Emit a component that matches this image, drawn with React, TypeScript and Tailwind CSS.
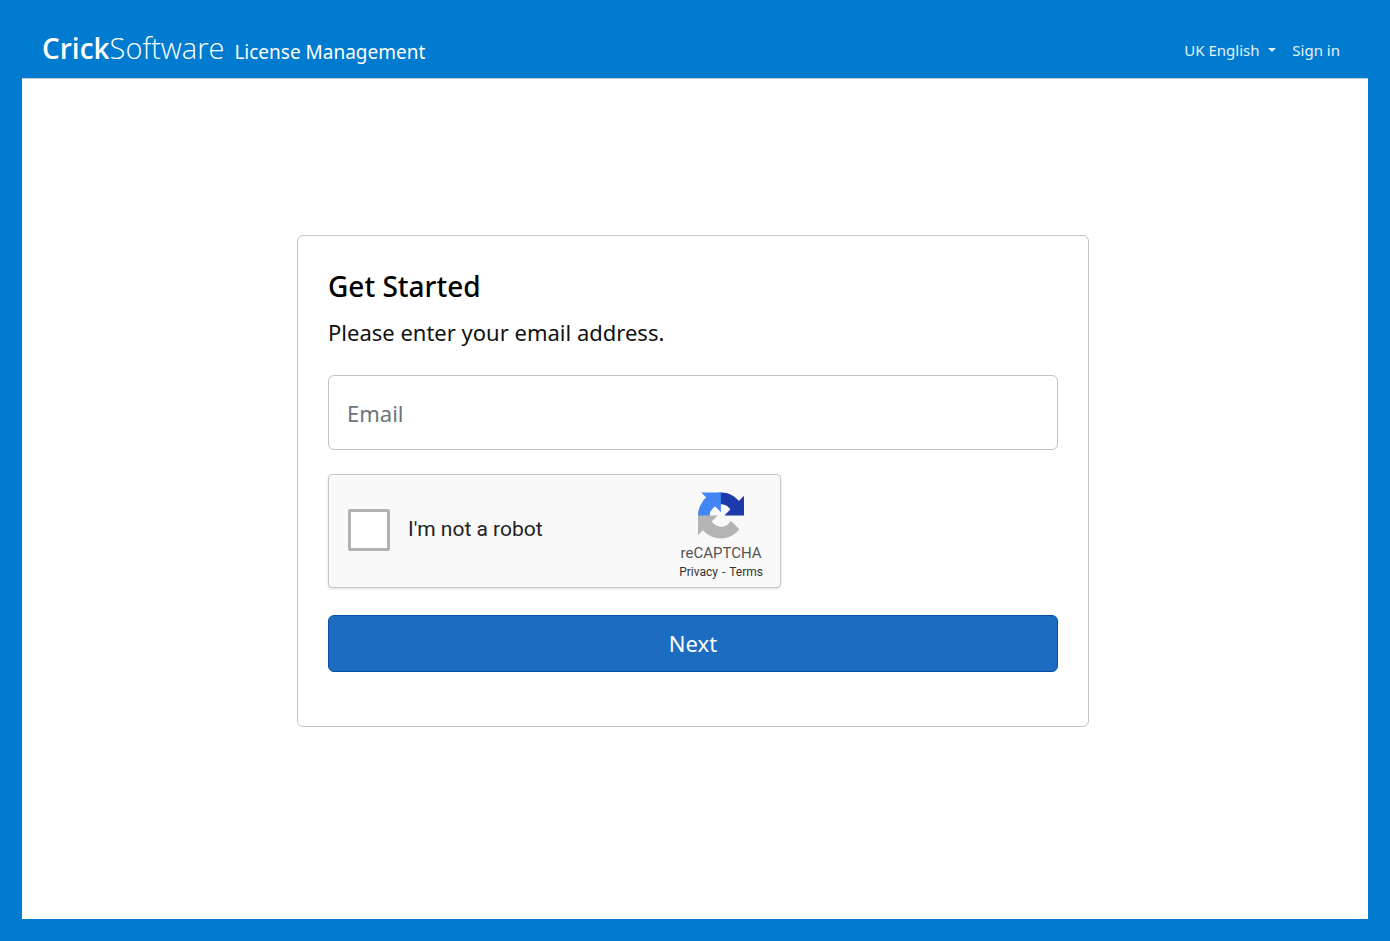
import { useState } from "react";

const RecaptchaLogo = () => (
    <svg width="46" height="47" viewBox="0 0 64 64" aria-hidden="true">
        <path fill="#1c3aa9" d="M64 31.955l-.033-1.37V4.687l-7.16 7.16C50.948 4.674 42.033.093 32.05.093c-10.4 0-19.622 4.96-25.458 12.64l11.736 11.86a15.55 15.55 0 0 1 4.754-5.334c2.05-1.6 4.952-2.906 8.968-2.906.485 0 .86.057 1.135.163 4.976.393 9.288 3.14 11.828 7.124l-8.307 8.307L64 31.953" />
        <path fill="#4285f4" d="M31.862.094l-1.37.033H4.594l7.16 7.16C4.58 13.147 0 22.06 0 32.046c0 10.4 4.96 19.622 12.64 25.458L24.5 45.768a15.55 15.55 0 0 1-5.334-4.754c-1.6-2.05-2.906-4.952-2.906-8.968 0-.485.057-.86.163-1.135.393-4.976 3.14-9.288 7.124-11.828l8.307 8.307L31.86.095" />
        <path fill="#b4b4b4" d="M.001 32.045l.033 1.37v25.898l7.16-7.16c5.86 7.173 14.774 11.754 24.76 11.754 10.4 0 19.622-4.96 25.458-12.64l-11.736-11.86a15.55 15.55 0 0 1-4.754 5.334c-2.05 1.6-4.952 2.906-8.968 2.906-.485 0-.86-.057-1.135-.163-4.976-.393-9.288-3.14-11.828-7.124l8.307-8.307c-10.522.04-22.4.066-27.295-.005" />
    </svg>
);

const Header = () => {
    const [language, setLanguage] = useState("en-GB");

    return (
        <header className="flex h-14 items-center justify-between pl-5 pr-7 text-white">
            <a href="#" className="flex items-baseline gap-2.5">
                <span className="font-['Open_Sans',sans-serif] leading-8">
                    <span className="text-[28px] font-semibold">Crick</span>
                    <span className="text-[29px] font-light">Software</span>
                </span>
                <span className="text-[19px] leading-8">License Management</span>
            </a>
            <nav className="flex items-center gap-4 text-[15px] text-white/90">
                <label className="flex items-center gap-2">
                    <select
                        aria-label="Language"
                        value={language}
                        onChange={(e) => setLanguage(e.target.value)}
                        className="appearance-none bg-transparent outline-none"
                    >
                        <option value="en-GB">UK English</option>
                    </select>
                    <svg width="8" height="4" viewBox="0 0 8 4" fill="currentColor" aria-hidden="true">
                        <path d="M0 0h8L4 4z" />
                    </svg>
                </label>
                <a href="#">Sign in</a>
            </nav>
        </header>
    );
};

const Recaptcha = () => {
    const [checked, setChecked] = useState(false);

    return (
        <div className="flex h-[114px] max-w-[453px] items-center justify-between rounded-sm border border-[#c6c6c6] bg-[#f9f9f9] pl-[19px] pr-[17px] font-[Roboto,sans-serif] shadow-sm">
            <label className="flex items-center gap-[18px] pb-0.5 text-[21px] text-[#222]">
                <input
                    type="checkbox"
                    checked={checked}
                    onChange={(e) => setChecked(e.target.checked)}
                    className="size-[42px] appearance-none rounded-xs border-3 border-[#b2b2b2] bg-white checked:bg-[#4285f4]"
                />
                I'm not a robot
            </label>
            <div className="flex flex-col items-center pt-2.5 text-[#555]">
                <RecaptchaLogo />
                <span className="mt-1 text-[15px] leading-5">reCAPTCHA</span>
                <span className="flex gap-1 text-xs leading-[18px] text-[#333]">
                    <a href="#">Privacy</a>
                    <span>-</span>
                    <a href="#">Terms</a>
                </span>
            </div>
        </div>
    );
};

const App = () => {
    const [email, setEmail] = useState("");

    const handleSubmit = (e: React.FormEvent<HTMLFormElement>) => {
        e.preventDefault();
    };

    return (
        <div className="flex min-h-screen flex-col bg-[#007bd0] p-[22px] font-['Noto_Sans','Open_Sans',sans-serif]">
            <Header />
            <main className="flex grow items-start justify-center border-t border-[#c4ccd2] bg-white px-6 pt-[156px] pb-10">
                <div className="mr-1 w-full max-w-[792px] rounded-md border border-[#c4c4c4] px-[30px] pt-[30px] pb-[54px]">
                    <h1 className="text-[28px] leading-10 font-medium text-black">Get Started</h1>
                    <p className="mt-2 text-[22px] leading-9 text-[#111]">Please enter your email address.</p>
                    <form onSubmit={handleSubmit} className="mt-[25px] flex flex-col">
                        <input
                            type="email"
                            name="email"
                            aria-label="Email"
                            placeholder="Email"
                            value={email}
                            onChange={(e) => setEmail(e.target.value)}
                            className="h-[75px] w-full rounded-md border border-[#bcc4cc] px-[18px] text-[22px] text-[#495057] placeholder:text-[#6c757d]"
                        />
                        <div className="mt-6">
                            <Recaptcha />
                        </div>
                        <button
                            type="submit"
                            className="mt-[27px] h-[57px] w-full rounded-md border border-[#0551a6] bg-[#1c6dc1] text-[22px] text-white"
                        >
                            Next
                        </button>
                    </form>
                </div>
            </main>
        </div>
    );
};

export default App;
